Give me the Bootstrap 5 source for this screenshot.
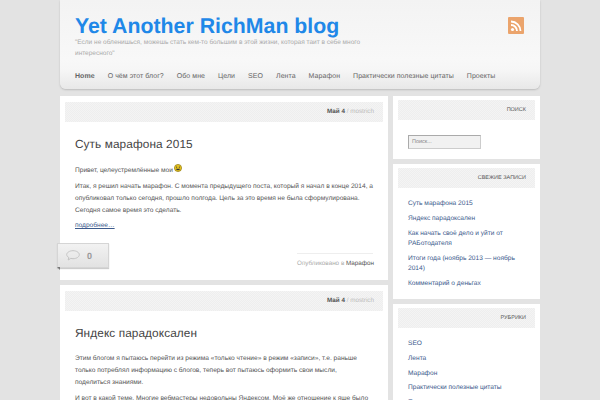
<!DOCTYPE html>
<html lang="ru">
<head>
<meta charset="utf-8">
<title>Yet Another RichMan blog</title>
<link href="https://cdn.jsdelivr.net/npm/bootstrap@5.3.0/dist/css/bootstrap.min.css" rel="stylesheet">
<style>
html,body{height:400px;overflow:hidden}
body{background:#e3e3e3;font-family:"Liberation Sans",Arial,sans-serif;font-size:6.6px;line-height:12px;color:#555;text-rendering:geometricPrecision}
a{color:#3c5a8c;text-decoration:none}
.shell{width:480px;margin-left:60px}
.top{height:89px;background:linear-gradient(#f3f3f3 0,#f8f8f8 60px,#f6f6f6 70px,#e8e8e8 89px);border-radius:0 0 6px 6px;box-shadow:0 1px 2px #bbb;padding:16px 15px 0;position:relative}
.brand{font-size:21.3px;line-height:21px;font-weight:700;color:#1f88e8;margin:0}
.tag{font-size:6.5px;line-height:11px;color:#aaa;width:300px;margin:0}
.menu{margin-top:12px;gap:13px;font-size:7px;letter-spacing:.05px;color:#666;line-height:12px}
.menu a{color:#666}
.menu .on{font-weight:700}
.rss{position:absolute;left:448px;top:17px;width:16px;height:17px;background:#eba46c;border-radius:1px;display:block}
.cols{gap:5px;margin-top:7px;align-items:flex-start}
.mainc{width:328px;flex:none}
.sidec{width:147px;flex:none}
.box{background:#fff;padding:6px 5px 0;margin-bottom:5px;position:relative}
.hatch{height:20px;background:repeating-conic-gradient(#eeeeee 0 25%,#f4f4f4 0 50%) 0 0/2px 2px;text-align:right;padding-right:9px;font-size:6.3px;line-height:20px}
.hatch b{color:#555}
.hatch span{color:#bbb}
.post{height:184px}
.post2{height:200px}
.ptitle{font-size:11.8px;line-height:16px;font-weight:400;color:#444;margin:14px 0 0 10px;letter-spacing:.1px}
.txt{margin:0 10px 4px 10px;color:#555;line-height:12px}
.first{margin-top:12px}
.more{color:#3c5a8c;text-decoration:underline;margin-left:10px;display:block;margin-top:-1px}
.smile{display:inline-block;width:8px;height:8px;vertical-align:0;margin-left:-1px}
.cmt{position:absolute;left:-3px;top:147px;width:52px;height:25px;background:linear-gradient(#f2f2f2,#e2e2e2);border:1px solid #d5d5d5;box-shadow:0 1px 1px #ccc;display:flex;align-items:center;gap:7px;padding-left:8px;font-size:9px;font-weight:700;color:#999}
.cmt::after{content:"";position:absolute;left:-1px;bottom:-3px;border-top:3px solid #777;border-left:3px solid transparent}
.foot{position:absolute;right:15px;top:157px;width:76px;border-top:1px solid #eee;text-align:right;font-size:6.3px;line-height:14px;color:#aaa;padding-top:3px;white-space:nowrap}
.foot a{color:#555}
.wid{text-transform:uppercase;color:#555;font-size:5.5px}
.sb1{height:63px}
.sb2{height:135px}
.sb3{height:96px}
.search{display:block;width:73px;height:14px;margin:15px 0 0 10px;background:#f1f1f1;border:1px solid #aaa;border-right-color:#ccc;border-bottom-color:#ccc;font-size:5.5px;line-height:12px;padding:0 3px;color:#888}
.links{margin:11px 0 0 10px;padding:0;list-style:none;width:122px;line-height:10.5px}
.links li{margin-bottom:4.3px}
</style>
</head>
<body>
<div class="shell">
  <header class="top">
    <h1 class="brand">Yet Another RichMan blog</h1>
    <p class="tag">"Если не обленишься, можешь стать кем-то большим в этой жизни, которая таит в себе много интересного"</p>
    <nav class="menu d-flex text-nowrap">
      <a class="on" href="#">Home</a><a href="#">О чём этот блог?</a><a href="#">Обо мне</a><a href="#">Цели</a><a href="#">SEO</a><a href="#">Лента</a><a href="#">Марафон</a><a href="#">Практически полезные цитаты</a><a href="#">Проекты</a>
    </nav>
    <a class="rss" href="#" aria-label="RSS"><svg width="16" height="17" viewBox="0 0 16 17"><circle cx="4.500" cy="12.500" r="1.600" fill="#fff"/><path d="M3 8a6 6 0 0 1 6 6M3 4.500A9.500 9.500 0 0 1 12.500 14" fill="none" stroke="#fff" stroke-width="1.800"/></svg></a>
  </header>
  <div class="cols d-flex">
    <main class="mainc">
      <article class="box post">
        <div class="hatch"><b>Май 4</b> <span>/ mostrich</span></div>
        <h2 class="ptitle">Суть марафона 2015</h2>
        <p class="txt first">Привет, целеустремлённые мои <svg class="smile" viewBox="0 0 9 9"><circle cx="4.500" cy="4.500" r="4" fill="#ecc81e" stroke="#8a7410" stroke-width=".8"/><circle cx="3" cy="3.400" r=".7" fill="#333"/><circle cx="6" cy="3.400" r=".7" fill="#333"/><path d="M2.200 5.300a2.400 2.400 0 0 0 4.600 0z" fill="#333"/></svg></p>
        <p class="txt">Итак, я решил начать марафон. С момента предыдущего поста, который я начал в конце 2014, а опубликовал только сегодня, прошло полгода. Цель за это время не была сформулирована. Сегодня самое время это сделать.</p>
        <a class="more" href="#">подробнее…</a>
        <div class="cmt"><svg width="14" height="11" viewBox="0 0 14 11"><path d="M7 .7c3.500 0 6.300 1.800 6.300 4s-2.800 4-6.300 4c-.8 0-1.500-.1-2.200-.3L2.200 10l.6-2.500C1.500 6.800.7 5.800.7 4.700c0-2.200 2.800-4 6.300-4z" fill="none" stroke="#c4c4c4"/></svg>0</div>
        <div class="foot">Опубликовано в <a href="#">Марафон</a></div>
      </article>
      <article class="box post2">
        <div class="hatch"><b>Май 4</b> <span>/ mostrich</span></div>
        <h2 class="ptitle">Яндекс парадоксален</h2>
        <p class="txt first">Этим блогом я пытаюсь перейти из режима «только чтение» в режим «записи», т.е. раньше только потреблял информацию с блогов, теперь вот пытаюсь оформить свои мысли, поделиться знаниями.</p>
        <p class="txt">И вот в какой теме. Многие вебмастеры недовольны Яндексом. Моё же отношение к яше было</p>
      </article>
    </main>
    <aside class="sidec">
      <section class="box sb1 pt-1">
        <div class="hatch wid">Поиск</div>
        <div class="search">Поиск...</div>
      </section>
      <section class="box sb2 pt-1">
        <div class="hatch wid">Свежие записи</div>
        <ul class="links">
          <li><a href="#">Суть марафона 2015</a></li>
          <li><a href="#">Яндекс парадоксален</a></li>
          <li><a href="#">Как начать своё дело и уйти от РАБотодателя</a></li>
          <li><a href="#">Итоги года (ноябрь 2013 — ноябрь 2014)</a></li>
          <li><a href="#">Комментарий о деньгах</a></li>
        </ul>
      </section>
      <section class="box sb3 pt-1">
        <div class="hatch wid">Рубрики</div>
        <ul class="links">
          <li><a href="#">SEO</a></li>
          <li><a href="#">Лента</a></li>
          <li><a href="#">Марафон</a></li>
          <li><a href="#">Практически полезные цитаты</a></li>
          <li><a href="#">Проекты</a></li>
        </ul>
      </section>
    </aside>
  </div>
</div>
<script src="https://cdn.jsdelivr.net/npm/bootstrap@5.3.0/dist/js/bootstrap.bundle.min.js"></script>
</body>
</html>
